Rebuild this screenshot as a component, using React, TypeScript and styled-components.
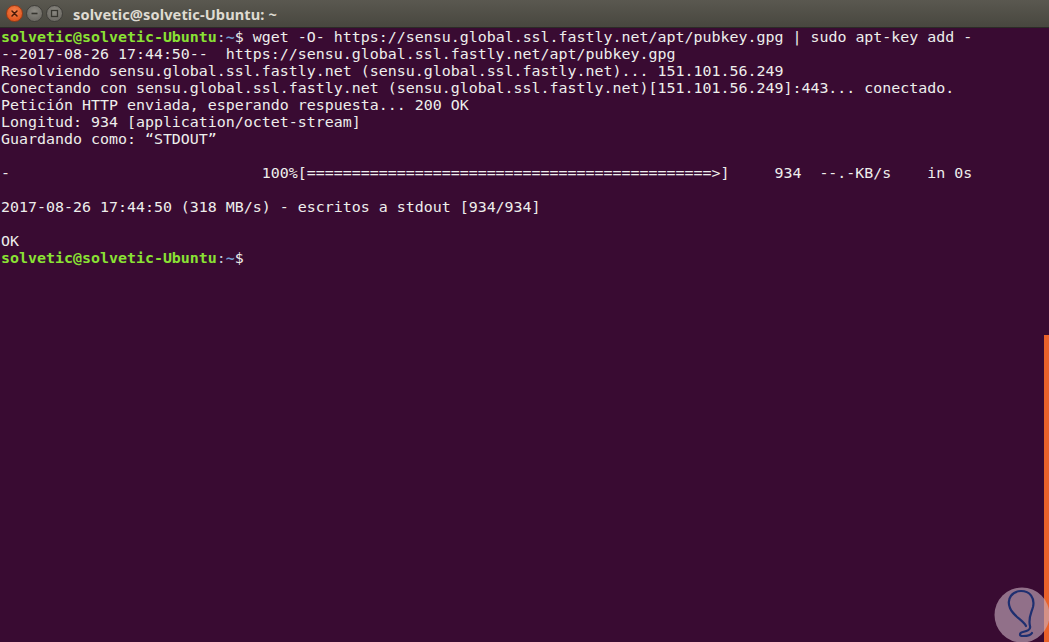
import React from "react";
import styled, { createGlobalStyle } from "styled-components";

const Global = createGlobalStyle`
  html, body { margin: 0; padding: 0; width: 100%; height: 100%; overflow: hidden; background: #390b32; }
  #root { width: 100%; height: 100%; }
`;

const Window = styled.div`
  position: relative;
  width: 1049px;
  height: 642px;
  display: flex;
  flex-direction: column;
  background: #390b32;
  overflow: hidden;
`;

const TitleBar = styled.div`
  height: 27px;
  flex: 0 0 27px;
  display: flex;
  align-items: center;
  padding-left: 6px;
  gap: 2px;
  background: linear-gradient(#5a5850, #48473f);
  border-bottom: 1px solid #2c2b27;
  box-sizing: content-box;
`;

const Btn = styled.div<{ $close?: boolean }>`
  width: 17px;
  height: 17px;
  border-radius: 50%;
  box-sizing: border-box;
  display: flex;
  align-items: center;
  justify-content: center;
  margin-right: 1px;
  background: ${(p) =>
    p.$close
      ? "radial-gradient(circle at 50% 35%, #f5834d, #e25a22 70%)"
      : "radial-gradient(circle at 50% 35%, #8c8a83, #6e6c66 70%)"};
  border: 1px solid ${(p) => (p.$close ? "#9a3a14" : "#3f3e3a")};
`;

const Title = styled.div`
  margin-left: 7px;
  font-family: "Noto Sans", "Open Sans", sans-serif;
  font-weight: 700;
  font-size: 14.6px;
  color: #dfdbd2;
  letter-spacing: 0.1px;
`;

const Terminal = styled.div`
  flex: 1;
  padding: 1px 0 0 1px;
  font-family: "DejaVu Sans Mono", "Liberation Mono", monospace;
  font-size: 14.95px;
  line-height: 17px;
  color: #eeeeec;
  white-space: pre;
`;

const Line = styled.div`
  height: 17px;
`;

const User = styled.span`
  color: #8ae234;
  font-weight: 700;
`;

const Path = styled.span`
  color: #729fcf;
  font-weight: 700;
`;

const Colon = styled.span`
  color: #c8c8d8;
`;

const Scrollbar = styled.div`
  position: absolute;
  right: 0;
  top: 335px;
  bottom: 0;
  width: 5px;
  background: #e9622a;
`;

const Watermark = styled.svg`
  position: absolute;
  right: -2px;
  bottom: -2px;
`;

const Prompt = () => (
  <>
    <User>solvetic@solvetic-Ubuntu</User>
    <Colon>:</Colon>
    <Path>~</Path>$
  </>
);

const progress =
  "-                            100%[" +
  "=".repeat(45) +
  ">]     934  --.-KB/s    in 0s";

export default function App() {
  return (
    <Window>
      <Global />
      <TitleBar>
        <Btn $close>
          <svg width="9" height="9" viewBox="0 0 9 9">
            <path d="M2 2 L7 7 M7 2 L2 7" stroke="#4a1a08" strokeWidth="1.5" strokeLinecap="round" />
          </svg>
        </Btn>
        <Btn>
          <svg width="9" height="9" viewBox="0 0 9 9">
            <path d="M1.5 4.5 H7.5" stroke="#36352f" strokeWidth="1.6" />
          </svg>
        </Btn>
        <Btn>
          <svg width="9" height="9" viewBox="0 0 9 9">
            <rect x="1.5" y="1.5" width="6" height="6" fill="none" stroke="#36352f" strokeWidth="1.3" />
          </svg>
        </Btn>
        <Title>solvetic@solvetic-Ubuntu: ~</Title>
      </TitleBar>
      <Terminal>
        <Line>
          <Prompt /> wget -O- https://sensu.global.ssl.fastly.net/apt/pubkey.gpg | sudo apt-key add -
        </Line>
        <Line>--2017-08-26 17:44:50--  https://sensu.global.ssl.fastly.net/apt/pubkey.gpg</Line>
        <Line>Resolviendo sensu.global.ssl.fastly.net (sensu.global.ssl.fastly.net)... 151.101.56.249</Line>
        <Line>Conectando con sensu.global.ssl.fastly.net (sensu.global.ssl.fastly.net)[151.101.56.249]:443... conectado.</Line>
        <Line>Petición HTTP enviada, esperando respuesta... 200 OK</Line>
        <Line>Longitud: 934 [application/octet-stream]</Line>
        <Line>Guardando como: “STDOUT”</Line>
        <Line> </Line>
        <Line>{progress}</Line>
        <Line> </Line>
        <Line>2017-08-26 17:44:50 (318 MB/s) - escritos a stdout [934/934]</Line>
        <Line> </Line>
        <Line>OK</Line>
        <Line>
          <Prompt />
        </Line>
      </Terminal>
      <Scrollbar />
      <Watermark width="58" height="58" viewBox="0 0 58 58">
        <circle cx="29" cy="29" r="27.5" fill="rgba(200,175,190,0.62)" />
        <path
          d="M33 40 C 30 34, 20 30, 17 22 C 13 12, 20 5, 28 5 C 37 5, 42 12, 40 21 C 38 28, 35 32, 37 40 C 38 44, 34 45, 30 46 C 26 47, 26 50, 30 50 C 35 50, 38 49, 39 47"
          fill="none"
          stroke="#1f2f70"
          strokeWidth="2.2"
          strokeLinecap="round"
          strokeLinejoin="round"
        />
      </Watermark>
    </Window>
  );
}
